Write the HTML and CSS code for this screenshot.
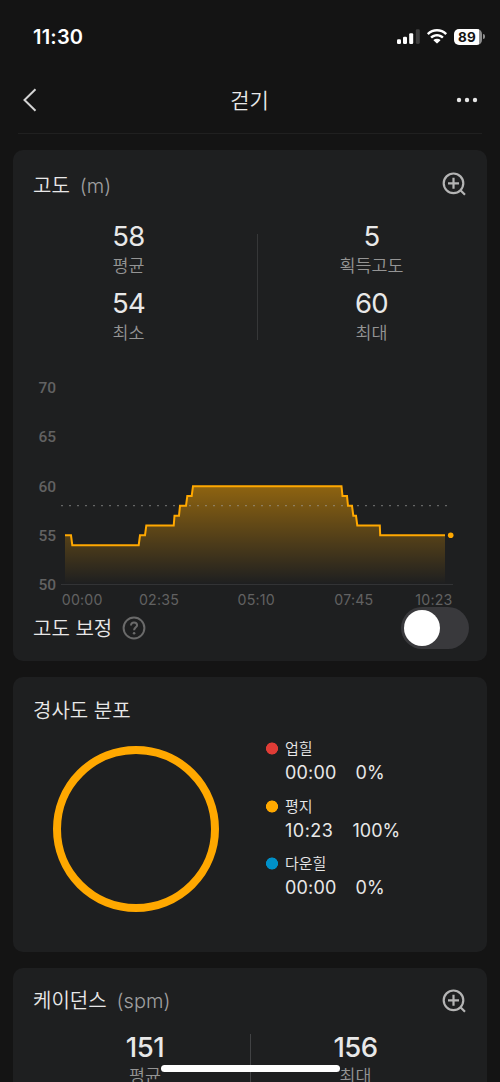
FILE: index.html
```html
<!DOCTYPE html>
<html lang="ko">
<head>
<meta charset="utf-8">
<title>걷기</title>
<link rel="stylesheet" href="styles.css">
</head>
<body>
<div class="screen">
  <header class="status">
    <span class="clock">11:30</span>
    <div class="indicators">
      <svg class="signal" width="24" height="16" viewBox="0 0 24 16">
        <rect x="0" y="10.3" width="4" height="4.7" rx="1.2" fill="#fff"/>
        <rect x="6" y="7.8" width="4" height="7.2" rx="1.2" fill="#fff"/>
        <rect x="12.2" y="4.2" width="4" height="10.8" rx="1.2" fill="#fff"/>
        <rect x="18.8" y="0.2" width="4" height="14.8" rx="1.4" fill="#3e3e3e"/>
      </svg>
      <svg class="wifi" width="20" height="15" viewBox="0 0 20 15">
        <path d="M10 0C6.200 0 2.700 1.500.200 3.900Q-.100 4.200.200 4.500L1.350 5.650Q1.650 5.950 1.950 5.650C4.100 3.700 6.900 2.600 10 2.600S15.900 3.700 18.050 5.650Q18.350 5.950 18.650 5.650L19.800 4.500Q20.100 4.200 19.800 3.900C17.300 1.500 13.800 0 10 0Z" fill="#fff"/>
        <path d="M10 4.900C7.500 4.900 5.200 5.850 3.500 7.400Q3.200 7.700 3.500 8L4.700 9.150Q5 9.400 5.300 9.150C6.600 8.050 8.200 7.400 10 7.400S13.400 8.050 14.700 9.150Q15 9.400 15.300 9.150L16.500 8Q16.800 7.700 16.500 7.400C14.800 5.850 12.500 4.900 10 4.900Z" fill="#fff"/>
        <path d="M10 9.700C8.700 9.700 7.600 10.150 6.750 10.850Q6.450 11.150 6.750 11.450L9.650 14.250Q10 14.550 10.350 14.250L13.250 11.450Q13.550 11.150 13.250 10.850C12.400 10.150 11.300 9.700 10 9.700Z" fill="#fff"/>
      </svg>
      <div class="battery"><span class="battery-level">89</span></div>
      <span class="battery-cap"></span>
    </div>
  </header>

  <nav class="nav">
    <svg class="back" width="16" height="26" viewBox="0 0 16 26"><path d="M13.500 2.200 2.500 13 13.500 23.800" fill="none" stroke="#d4d4d4" stroke-width="2"/></svg>
    <h1 class="page-title">걷기</h1>
    <svg class="more" width="22" height="6" viewBox="0 0 22 6" fill="#e6e6e6"><circle cx="3" cy="3" r="2.200"/><circle cx="11" cy="3" r="2.200"/><circle cx="19" cy="3" r="2.200"/></svg>
  </nav>

  <main class="cards">
    <section class="card elevation">
      <div class="card-head">
        <h2 class="title">고도</h2><span class="unit">(m)</span>
        <svg class="zoom-in" width="24" height="24" viewBox="0 0 24 24" fill="none" stroke="#b4b4b4" stroke-width="2.200"><circle cx="11.500" cy="11.300" r="9.800"/><path d="M11.500 5.800v11M6 11.300h11M18.200 18l4.800 4.800"/></svg>
      </div>
      <div class="stats">
        <div class="col">
          <div class="num">58</div><div class="label">평균</div>
          <div class="num">54</div><div class="label">최소</div>
        </div>
        <span class="rule"></span>
        <div class="col">
          <div class="num">5</div><div class="label">획득고도</div>
          <div class="num">60</div><div class="label">최대</div>
        </div>
      </div>
      <svg class="chart" width="474" height="240" viewBox="13 370 474 240">
        <defs>
          <linearGradient id="fill" gradientUnits="userSpaceOnUse" x1="0" y1="486" x2="0" y2="584">
            <stop offset="0" stop-color="#ffa800" stop-opacity=".5"/>
            <stop offset="1" stop-color="#ffa800" stop-opacity="0"/>
          </linearGradient>
        </defs>
        <g class="y-axis">
          <text x="56" y="393.300">70</text><text x="56" y="442.400">65</text><text x="56" y="492">60</text><text x="56" y="541.400">55</text><text x="56" y="590.400">50</text>
        </g>
        <path d="M61 584.500H453" stroke="#323335" stroke-width="1"/>
        <path d="M65 584V535.300H71L72.300 545.200H138.700L140 535.300H145L146.300 525.500H173.700L174.500 515.700H179L180 505.800H186L187.300 496H191.700L193 486.200H341.500L342.500 496H347L348 505.800H352L353.300 515.700H356L357.300 525.500H379.800L380.200 535.300H445V584Z" fill="url(#fill)"/>
        <path d="M61 505.700H447" stroke="#a0a0a0" stroke-opacity=".55" stroke-width="1.300" stroke-dasharray="2 6"/>
        <path d="M65 535.300H71L72.300 545.200H138.700L140 535.300H145L146.300 525.500H173.700L174.500 515.700H179L180 505.800H186L187.300 496H191.700L193 486.200H341.500L342.500 496H347L348 505.800H352L353.300 515.700H356L357.300 525.500H379.800L380.200 535.300H445" fill="none" stroke="#ffa800" stroke-width="2"/>
        <circle cx="450.700" cy="535.300" r="2.800" fill="#ffa800"/>
        <g class="x-axis">
          <text x="82.200" y="604.500">00:00</text><text x="159" y="604.500">02:35</text><text x="256.200" y="604.500">05:10</text><text x="353.900" y="604.500">07:45</text><text x="433.900" y="604.500">10:23</text>
        </g>
      </svg>
      <div class="correction">
        <span class="title">고도 보정</span>
        <svg class="help" width="24" height="24" viewBox="0 0 24 24" fill="none" stroke="#6a6a6a"><circle cx="12" cy="12" r="10.400" stroke-width="2"/><path d="M9 9.500C9 7.600 10.200 6.400 12 6.400S15.100 7.500 15.100 9.200C15.100 11.300 12.100 11.500 12.100 14.300" stroke-width="2"/><circle cx="12.100" cy="17.200" r="1.300" fill="#6a6a6a" stroke="none"/></svg>
        <span class="toggle"><span class="knob"></span></span>
      </div>
    </section>

    <section class="card slope">
      <h2 class="title">경사도 분포</h2>
      <div class="slope-body">
        <div class="ring"></div>
        <ul class="legend">
          <li class="entry up"><span class="name">업힐</span><span class="time">00:00</span><span class="pct">0%</span></li>
          <li class="entry flat"><span class="name">평지</span><span class="time">10:23</span><span class="pct">100%</span></li>
          <li class="entry down"><span class="name">다운힐</span><span class="time">00:00</span><span class="pct">0%</span></li>
        </ul>
      </div>
    </section>

    <section class="card cadence">
      <div class="card-head">
        <h2 class="title">케이던스</h2><span class="unit">(spm)</span>
        <svg class="zoom-in" width="24" height="24" viewBox="0 0 24 24" fill="none" stroke="#b4b4b4" stroke-width="2.200"><circle cx="11.500" cy="11.300" r="9.800"/><path d="M11.500 5.800v11M6 11.300h11M18.200 18l4.800 4.800"/></svg>
      </div>
      <div class="pair">
        <div class="col"><div class="num strong">151</div><div class="label">평균</div></div>
        <span class="rule"></span>
        <div class="col"><div class="num strong">156</div><div class="label">최대</div></div>
      </div>
    </section>
  </main>
  <div class="home-bar"></div>
</div>
</body>
</html>
```
FILE: styles.css
```css
* { box-sizing: border-box; margin: 0; padding: 0; }
body {
  background: #141414;
  color: #e8e8e8;
  font-family: Inter, "Noto Sans CJK KR", sans-serif;
}
.screen { position: relative; width: 500px; height: 1082px; overflow: hidden; }
svg { display: block; flex: none; }

.status {
  height: 73px;
  padding: 0 15px 0 33px;
  display: flex;
  align-items: center;
  justify-content: space-between;
}
.clock { color: #fff; font-size: 20px; font-weight: 600; letter-spacing: 0.2px; }
.indicators { display: flex; align-items: center; }
.wifi { margin-left: 6px; }
.battery {
  margin-left: 7px;
  width: 28px;
  height: 16px;
  border-radius: 5px;
  background: linear-gradient(90deg, #fff 25px, #8e8e8e 25px);
  padding-left: 4px;
}
.battery-level { display: block; color: #141414; font-size: 13.5px; font-weight: 700; line-height: 17px; letter-spacing: 0.3px; }
.battery-cap { width: 2px; height: 5px; margin-left: 1px; border-radius: 0 2px 2px 0; background: #8e8e8e; }

.nav {
  height: 61px;
  margin: 0 18px;
  padding: 0 4px 6px;
  border-bottom: 1px solid #202020;
  display: flex;
  align-items: center;
  justify-content: space-between;
}
.page-title { font-size: 21px; font-weight: 350; line-height: 30px; padding: 2px 0 0 5px; }

.cards { padding: 16px 13px 0; display: flex; flex-direction: column; gap: 16px; }
.card { background: #1e1f20; border-radius: 10px; flex: none; }
.elevation { height: 511px; }
.slope { height: 275px; padding: 19px 20px 0; }
.cadence { height: 140px; }

.card-head { height: 66px; padding: 0 21px 0 20px; display: flex; align-items: center; }
.elevation .card-head { height: 68px; }
.title { font-size: 20px; font-weight: 350; line-height: 30px; white-space: nowrap; }
.card-head .title { padding-top: 4px; }
.unit { margin-left: 10px; padding-top: 3px; font-size: 20px; font-weight: 350; color: #a0a0a0; }
.cadence .title, .cadence .unit { padding-top: 0; }
.zoom-in { margin-left: auto; }

.stats { height: 152px; display: grid; grid-template-columns: 231px 14px 227px; }
.col { display: flex; flex-direction: column; align-items: center; }
.num { height: 34px; font-size: 27.5px; line-height: 36px; letter-spacing: -0.7px; }
.num.strong { font-weight: 500; height: 28px; line-height: 26px; }
.label { height: 33px; font-size: 17.4px; line-height: 28px; color: #949494; font-weight: 350; }
.rule { width: 1px; height: 106px; margin-top: 16px; background: #363738; justify-self: end; }

.y-axis { font: 500 15.5px Roboto, sans-serif; fill: #626262; text-anchor: end; }
.x-axis { font: 400 14.2px Inter, sans-serif; letter-spacing: 0.2px; fill: #626262; text-anchor: middle; }

.correction { height: 42px; margin-top: -3px; padding: 0 18px 0 20px; display: flex; align-items: center; }
.correction .title { padding-top: 1px; }
.help { margin-left: 10px; }
.toggle { margin-left: auto; width: 68px; height: 42px; padding: 3px; border-radius: 21px; background: #39393c; }
.knob { display: block; width: 36px; height: 36px; border-radius: 50%; background: #fff; }

.slope-body { display: flex; padding: 11px 0 0 20px; }
.ring { width: 166px; height: 166px; margin-top: 9px; border: 8.5px solid #ffa800; border-radius: 50%; }
.legend { margin-left: 47px; list-style: none; }
.entry {
  height: 57.7px;
  padding-left: 19px;
  display: grid;
  grid-template-columns: auto 1fr;
  grid-template-rows: 23px 25px;
  column-gap: 19px;
  justify-items: start;
  align-items: center;
  background: radial-gradient(circle at 6px 11.5px, var(--dot) 5.7px, transparent 6.300px);
}
.up { --dot: #e03c36; }
.flat { --dot: #ffa800; }
.down { --dot: #0090c8; }
.name { grid-column: 1 / 3; font-size: 15px; line-height: 23px; font-weight: 350; }
.time, .pct { font-size: 18px; line-height: 25px; letter-spacing: 0.2px; }
.pct { letter-spacing: 0; }
.flat .time { letter-spacing: 0.5px; }

.pair { padding: 0 27px; display: grid; grid-template-columns: 210px 1px 209px; }
.pair .num { letter-spacing: -0.5px; }
.pair .rule { margin-top: 0; background: #414244; }

.home-bar {
  position: absolute;
  left: 161px;
  top: 1065px;
  width: 179px;
  height: 7px;
  border-radius: 4px;
  background: #fff;
}
```
